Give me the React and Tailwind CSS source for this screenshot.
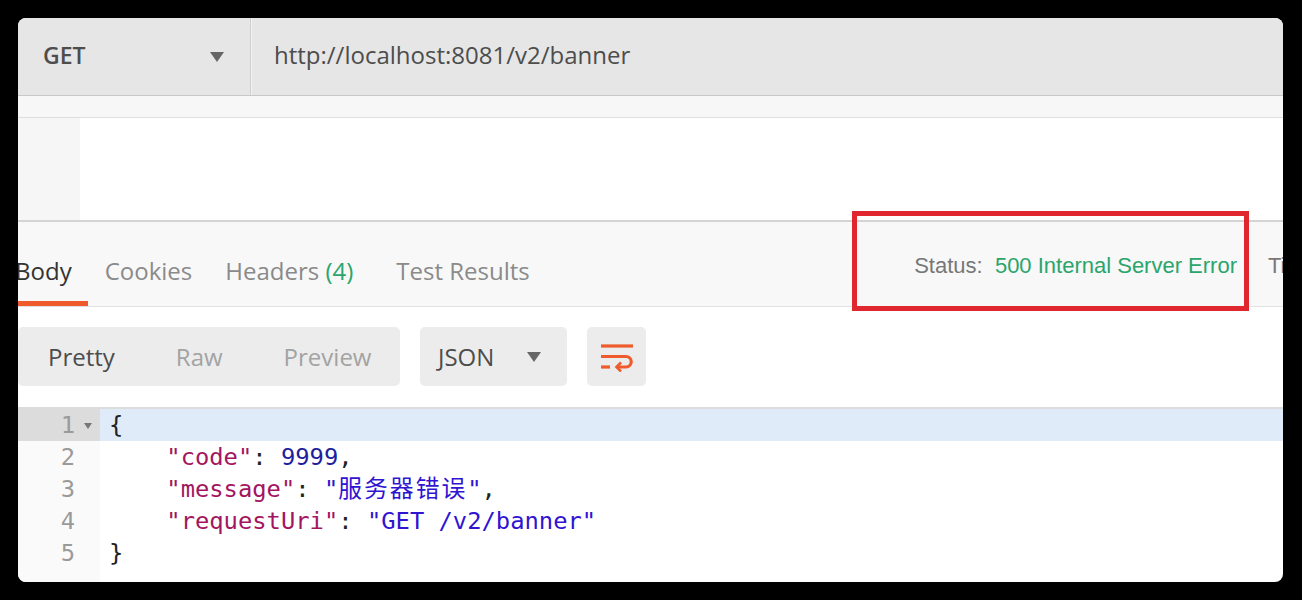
import React from 'react';

const ui = { fontFamily: '"Open Sans", "Noto Sans", sans-serif' };
const mono = { fontFamily: '"DejaVu Sans Mono", "Noto Sans CJK SC", monospace' };
const helv = { fontFamily: '"Liberation Sans", Arial, sans-serif' };

const Caret = ({ className }) => (
    <svg width="14" height="10" viewBox="0 0 14 10" className={className}>
        <path d="M0 0 H14 L7 10 Z" fill="#666" />
    </svg>
);

const WrapIcon = () => (
    <svg width="34" height="30" viewBox="0 0 34 30" fill="none" stroke="#ef5b2b" strokeWidth="3.2">
        <path d="M1 4 H33" />
        <path d="M1 14.5 H26 A5.2 5.2 0 0 1 26 25 H17" />
        <path d="M21 20.5 L16.5 25 L21 29.5" strokeWidth="2.6" />
        <path d="M1 25 H10" />
    </svg>
);

const Key = ({ children }) => <span className="text-[#a3165f]">"{children}"</span>;

const codeLines = [
    <span>{'{'}</span>,
    <span>{'    '}<Key>code</Key>: <span className="text-[#1f1f9e]">9999</span>,</span>,
    <span>{'    '}<Key>message</Key>: <span className="text-[#3014d2]">"<span className="tracking-[2px]">服务器错误</span>"</span>,</span>,
    <span>{'    '}<Key>requestUri</Key>: <span className="text-[#3014d2]">"GET /v2/banner"</span></span>,
    <span>{'}'}</span>,
];

export default function App() {
    return (
        <div className="w-[1302px] h-[600px] bg-black pt-[18px] pl-[18px]">
            <div className="relative w-[1265px] h-[564px] rounded-[8px] overflow-hidden bg-white flex flex-col">
                {/* request bar */}
                <div className="h-[78px] bg-[#e6e6e6] border-b border-[#c9c9c9] flex items-center shrink-0" style={ui}>
                    <div className="w-[233px] h-full flex items-center justify-between pl-[25px] pr-[26px] border-r border-[#cfcfcf] shadow-[1px_0_0_#f2f2f2]">
                        <span className="text-[23px] font-semibold text-[#4d4d4d] -mt-[2px]">GET</span>
                        <Caret />
                    </div>
                    <span className="pl-[23px] text-[24px] text-[#4d4d4d] -mt-[4px]">http://localhost:8081/v2/banner</span>
                </div>
                <div className="h-[22px] bg-[#f7f7f7] border-b border-[#dedede] shrink-0" />
                <div className="h-[104px] flex shrink-0 border-b-2 border-[#d4d4d4]">
                    <div className="w-[62px] bg-[#f6f6f6]" />
                    <div className="flex-1 bg-white" />
                </div>

                {/* response tabs */}
                <div className="h-[85px] bg-[#f8f8f8] border-b border-[#e2e2e2] flex items-end justify-between shrink-0" style={ui}>
                    <div className="flex items-end -ml-[19px] gap-[1px] text-[24px]">
                        <div className="px-[16px] pb-[12px] border-b-[5px] border-[#ef5b2b] text-[#333]">Body</div>
                        <div className="px-[16px] pb-[17px] text-[#8a8a8a]">Cookies</div>
                        <div className="px-[16px] pb-[17px] text-[#8a8a8a]">Headers <span className="text-[#2aa56b]">(4)</span></div>
                        <div className="px-[26px] pb-[17px] text-[#8a8a8a]">Test Results</div>
                    </div>
                    <div className="flex items-center h-full gap-[31px] pt-[2px]" style={helv}>
                        <div className="text-[22px] text-[#777] whitespace-nowrap">
                            Status:&nbsp; <span className="text-[#2aa56b]">500 Internal Server Error</span>
                        </div>
                        <div className="text-[22px] text-[#777] w-[15px] overflow-hidden whitespace-nowrap">Time</div>
                    </div>
                </div>

                {/* toolbar */}
                <div className="flex items-center gap-[20px] mt-[20px] h-[59px] shrink-0" style={ui}>
                    <div className="w-[382px] h-full bg-[#ececec] rounded-[5px] flex items-center text-[24px]">
                        <span className="pl-[30px] text-[#4d4d4d]">Pretty</span>
                        <span className="pl-[61px] text-[#a3a3a3]">Raw</span>
                        <span className="pl-[61px] text-[#a3a3a3]">Preview</span>
                    </div>
                    <div className="w-[147px] h-full bg-[#ececec] rounded-[5px] flex items-center justify-between pl-[18px] pr-[26px] text-[24px] text-[#4d4d4d]">
                        <span>JSON</span>
                        <Caret />
                    </div>
                    <div className="w-[59px] h-full bg-[#ececec] rounded-[5px] flex items-center justify-center">
                        <WrapIcon />
                    </div>
                </div>

                {/* code */}
                <div className="mt-[21px] border-t-2 border-[#dcdcdc] flex-1 flex text-[23.8px] leading-[32px]" style={mono}>
                    <div className="w-[82px] bg-[#fafafa] text-[#9a9a9a] shrink-0">
                        {codeLines.map((_, i) => (
                            <div key={i} className={`h-[32px] flex items-center justify-end pr-[25px] relative ${i === 0 ? 'bg-[#dcdcdc]' : ''}`}>
                                {i + 1}
                                {i === 0 && (
                                    <svg width="8" height="6" viewBox="0 0 8 6" className="absolute right-[8px] top-[14px]">
                                        <path d="M0 0 H8 L4 6 Z" fill="#777" />
                                    </svg>
                                )}
                            </div>
                        ))}
                    </div>
                    <div className="flex-1 text-[#222]">
                        {codeLines.map((line, i) => (
                            <div key={i} className={`h-[32px] pl-[9px] whitespace-pre flex items-center ${i === 0 ? 'bg-[#e0ebfa]' : ''}`}>
                                {line}
                            </div>
                        ))}
                    </div>
                </div>

                {/* annotation */}
                <div className="absolute left-[834px] top-[193px] w-[397px] h-[100px] border-[5px] border-[#e0262f]" />
            </div>
        </div>
    );
}
